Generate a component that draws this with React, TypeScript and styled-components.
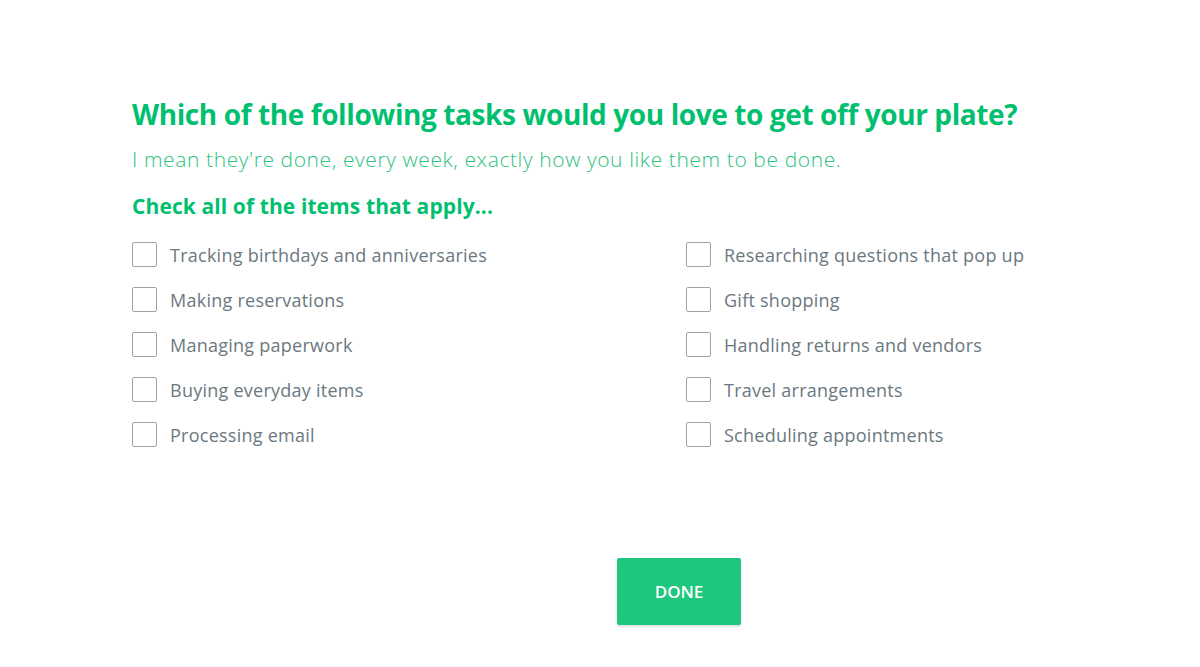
import styled, { createGlobalStyle } from 'styled-components';

const GlobalStyle = createGlobalStyle`
  html, body {
    margin: 0;
    padding: 0;
    background: #fff;
    font-family: 'Open Sans', 'Liberation Sans', sans-serif;
  }
`;

const Page = styled.div`
  display: flex;
  flex-direction: column;
  padding: 94px 0 0 132px;
  min-height: 667px;
  box-sizing: border-box;
`;

const Title = styled.h1`
  margin: 0;
  font-size: 28px;
  line-height: 40px;
  font-weight: 700;
  color: #00bf6f;
  letter-spacing: -0.4px;
`;

const Subtitle = styled.p`
  margin: 10px 0 0;
  font-size: 21px;
  line-height: 30px;
  font-weight: 300;
  letter-spacing: 0.6px;
  color: #2dc27e;
`;

const Instruction = styled.h2`
  margin: 18px 0 0;
  font-size: 21px;
  line-height: 28px;
  font-weight: 700;
  letter-spacing: 0.1px;
  color: #00bf6f;
`;

const Options = styled.div`
  display: grid;
  grid-template-columns: 554px 554px;
  grid-auto-flow: column;
  grid-template-rows: repeat(5, 45px);
  margin-top: 12px;
`;

const Option = styled.label`
  display: flex;
  align-items: center;
  gap: 13px;
  cursor: pointer;
`;

const Box = styled.input.attrs({ type: 'checkbox' })`
  appearance: none;
  margin: 0;
  width: 25px;
  height: 25px;
  border: 1px solid #9da3a6;
  border-radius: 2px;
  background: #fff;
  box-sizing: border-box;
`;

const OptionText = styled.span`
  font-size: 18px;
  letter-spacing: 0.25px;
  color: #6b787f;
`;

const DoneButton = styled.button`
  align-self: flex-start;
  margin: 101px 0 0 485px;
  width: 124px;
  height: 67px;
  border: none;
  border-radius: 2px;
  background: #1ec67e;
  color: #fff;
  font-family: inherit;
  font-size: 17px;
  font-weight: 600;
  box-shadow: 0 2px 2px rgba(0, 0, 0, 0.12);
  cursor: pointer;
`;

const items = [
  'Tracking birthdays and anniversaries',
  'Making reservations',
  'Managing paperwork',
  'Buying everyday items',
  'Processing email',
  'Researching questions that pop up',
  'Gift shopping',
  'Handling returns and vendors',
  'Travel arrangements',
  'Scheduling appointments',
];

export default function App() {
  return (
    <>
      <GlobalStyle />
      <Page>
        <Title>Which of the following tasks would you love to get off your plate?</Title>
        <Subtitle>I mean they're done, every week, exactly how you like them to be done.</Subtitle>
        <Instruction>Check all of the items that apply...</Instruction>
        <Options>
          {items.map((item) => (
            <Option key={item}>
              <Box />
              <OptionText>{item}</OptionText>
            </Option>
          ))}
        </Options>
        <DoneButton>DONE</DoneButton>
      </Page>
    </>
  );
}
